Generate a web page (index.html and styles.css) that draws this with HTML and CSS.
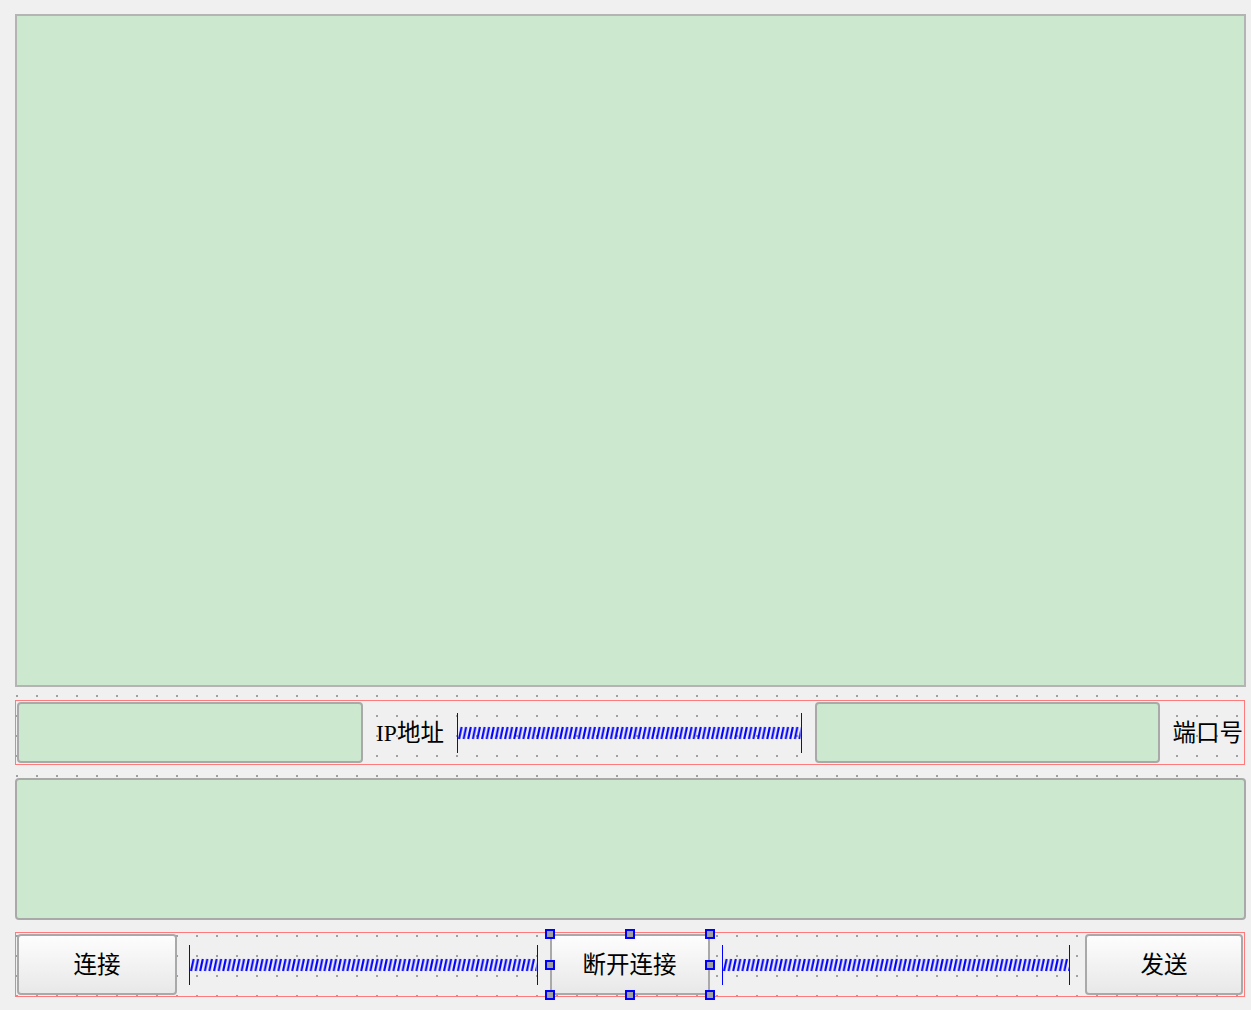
FILE: index.html
```html
<!DOCTYPE html>
<html lang="zh-CN">
<head>
<meta charset="utf-8">
<title>Form</title>
<link rel="stylesheet" href="styles.css">
</head>
<body>
<div class="form">
  <div class="output"></div>

  <div class="layout row-conn">
    <div class="line-edit w-ip"></div>
    <span class="label">IP地址</span>
    <div class="spacer">
      <svg class="spring" width="100%" height="40">
        <defs>
          <pattern id="coil1" width="4.6" height="40" patternUnits="userSpaceOnUse">
            <path d="M1 26 L3.6 14" stroke="#0000ff" stroke-width="2.1" fill="none"/>
          </pattern>
        </defs>
        <rect x="0" y="0" width="100%" height="40" fill="url(#coil1)"/>
      </svg>
    </div>
    <div class="line-edit w-port"></div>
    <span class="label">端口号</span>
  </div>

  <div class="text-edit"></div>

  <div class="layout row-btn">
    <button class="btn">连接</button>
    <div class="spacer">
      <svg class="spring" width="100%" height="40">
        <defs>
          <pattern id="coil2" width="4.6" height="40" patternUnits="userSpaceOnUse">
            <path d="M1 26 L3.6 14" stroke="#0000ff" stroke-width="2.1" fill="none"/>
          </pattern>
        </defs>
        <rect x="0" y="0" width="100%" height="40" fill="url(#coil2)"/>
      </svg>
    </div>
    <button class="btn selected">断开连接
      <span class="handle h-tl"></span>
      <span class="handle h-tc"></span>
      <span class="handle h-tr"></span>
      <span class="handle h-ml"></span>
      <span class="handle h-mr"></span>
      <span class="handle h-bl"></span>
      <span class="handle h-bc"></span>
      <span class="handle h-br"></span>
    </button>
    <div class="spacer">
      <svg class="spring" width="100%" height="40">
        <defs>
          <pattern id="coil3" width="4.6" height="40" patternUnits="userSpaceOnUse">
            <path d="M1 26 L3.6 14" stroke="#0000ff" stroke-width="2.1" fill="none"/>
          </pattern>
        </defs>
        <rect x="0" y="0" width="100%" height="40" fill="url(#coil3)"/>
      </svg>
    </div>
    <button class="btn last">发送</button>
  </div>
</div>
</body>
</html>
```

FILE: styles.css
```css
html, body {
  margin: 0;
  padding: 0;
}

body {
  width: 1251px;
  height: 1010px;
  overflow: hidden;
  background-color: #f0f0f0;
  background-image: conic-gradient(at 2px 2px, transparent 75%, #a0a0a0 0);
  background-size: 20px 20px;
  background-position: 16px 15px;
  font-family: "Liberation Serif", "Noto Sans CJK SC", serif;
  color: #000;
}

.form {
  display: flex;
  flex-direction: column;
  width: 1231px;
  margin: 14px 0 0 15px;
}

.output {
  height: 673px;
  box-sizing: border-box;
  background: #cce8cf;
  border: 2px solid #b4b4b4;
}

.layout {
  box-sizing: border-box;
  width: 1230px;
  height: 65px;
  padding: 1px;
  border: 1px solid #ff7a7a;
  display: flex;
  align-items: stretch;
}

.row-conn {
  margin-top: 13px;
  gap: 13px;
}

.row-btn {
  margin-top: 12px;
  gap: 12px;
}

.line-edit {
  box-sizing: border-box;
  background: #cce8cf;
  border: 2px solid #a9a9a9;
  border-radius: 4px;
}

.w-ip { width: 346px; }
.w-port { width: 345px; }

.label {
  display: flex;
  align-items: center;
  padding-bottom: 3px;
  font-size: 23.5px;
  white-space: nowrap;
}

.spacer {
  flex: 1;
  align-self: center;
  height: 40px;
  border-left: 1px solid #0000ff;
  border-right: 1px solid #0000ff;
  display: flex;
}

.spring {
  display: block;
}

.text-edit {
  margin-top: 13px;
  height: 142px;
  box-sizing: border-box;
  background: #cce8cf;
  border: 2px solid #a9a9a9;
  border-radius: 4px;
}

.btn {
  position: relative;
  width: 160px;
  box-sizing: border-box;
  padding: 0 0 3px 0;
  margin: 0;
  font-family: "Liberation Serif", "Noto Sans CJK SC", serif;
  font-size: 23.5px;
  color: #000;
  background: linear-gradient(#fdfdfd, #e8e8e8);
  border: 2px solid #a9a9a9;
  border-radius: 4px;
}

.btn.selected {
  width: 160px;
  border-radius: 0;
}

.btn.last {
  width: 158px;
  margin-left: 3px;
}

.handle {
  position: absolute;
  width: 10px;
  height: 10px;
  box-sizing: border-box;
  background: #a0a0a0;
  border: 2px solid #0000ff;
}

.h-tl { left: -7px; top: -7px; }
.h-tc { left: calc(50% - 5px); top: -7px; }
.h-tr { right: -7px; top: -7px; }
.h-ml { left: -7px; top: calc(50% - 5px); }
.h-mr { right: -7px; top: calc(50% - 5px); }
.h-bl { left: -7px; bottom: -7px; }
.h-bc { left: calc(50% - 5px); bottom: -7px; }
.h-br { right: -7px; bottom: -7px; }
```
